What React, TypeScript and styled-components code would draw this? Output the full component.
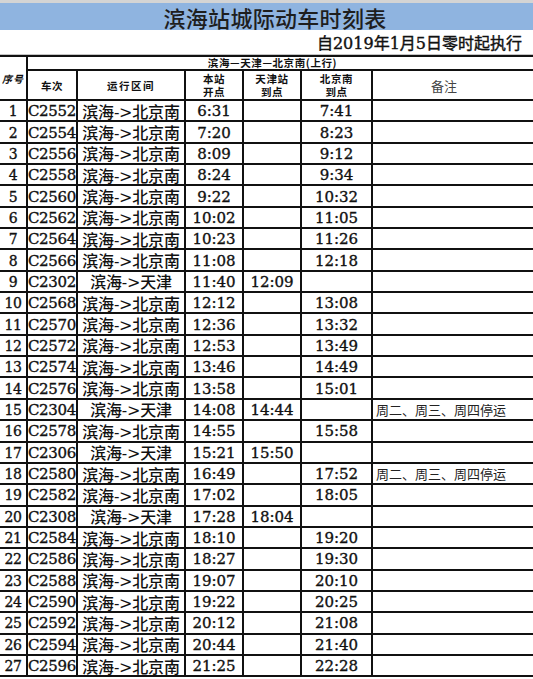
import React from 'react';
import styled, { createGlobalStyle } from 'styled-components';

type Train = {
  no: string;
  to: '北京南' | '天津';
  dep: string;
  tj?: string;
  bj?: string;
  note?: string;
};

const SKIP = '周二、周三、周四停运';

const trains: Train[] = [
  { no: 'C2552', to: '北京南', dep: '6:31', bj: '7:41' },
  { no: 'C2554', to: '北京南', dep: '7:20', bj: '8:23' },
  { no: 'C2556', to: '北京南', dep: '8:09', bj: '9:12' },
  { no: 'C2558', to: '北京南', dep: '8:24', bj: '9:34' },
  { no: 'C2560', to: '北京南', dep: '9:22', bj: '10:32' },
  { no: 'C2562', to: '北京南', dep: '10:02', bj: '11:05' },
  { no: 'C2564', to: '北京南', dep: '10:23', bj: '11:26' },
  { no: 'C2566', to: '北京南', dep: '11:08', bj: '12:18' },
  { no: 'C2302', to: '天津', dep: '11:40', tj: '12:09' },
  { no: 'C2568', to: '北京南', dep: '12:12', bj: '13:08' },
  { no: 'C2570', to: '北京南', dep: '12:36', bj: '13:32' },
  { no: 'C2572', to: '北京南', dep: '12:53', bj: '13:49' },
  { no: 'C2574', to: '北京南', dep: '13:46', bj: '14:49' },
  { no: 'C2576', to: '北京南', dep: '13:58', bj: '15:01' },
  { no: 'C2304', to: '天津', dep: '14:08', tj: '14:44', note: SKIP },
  { no: 'C2578', to: '北京南', dep: '14:55', bj: '15:58' },
  { no: 'C2306', to: '天津', dep: '15:21', tj: '15:50' },
  { no: 'C2580', to: '北京南', dep: '16:49', bj: '17:52', note: SKIP },
  { no: 'C2582', to: '北京南', dep: '17:02', bj: '18:05' },
  { no: 'C2308', to: '天津', dep: '17:28', tj: '18:04' },
  { no: 'C2584', to: '北京南', dep: '18:10', bj: '19:20' },
  { no: 'C2586', to: '北京南', dep: '18:27', bj: '19:30' },
  { no: 'C2588', to: '北京南', dep: '19:07', bj: '20:10' },
  { no: 'C2590', to: '北京南', dep: '19:22', bj: '20:25' },
  { no: 'C2592', to: '北京南', dep: '20:12', bj: '21:08' },
  { no: 'C2594', to: '北京南', dep: '20:44', bj: '21:40' },
  { no: 'C2596', to: '北京南', dep: '21:25', bj: '22:28' },
];

const GlobalStyle = createGlobalStyle`
  html, body {
    margin: 0;
    padding: 0;
    background: #fff;
    overflow: hidden;
  }
  body {
    font-family: "DejaVu Serif", "Noto Sans CJK SC", serif;
    color: #111;
  }
`;

const Sheet = styled.div`
  width: 533px;
  border-top: 3px solid #d4d4d4;
`;

const TitleBar = styled.h1`
  margin: 0;
  height: 27px;
  padding-left: 17px;
  background: #8fb4e0;
  display: flex;
  align-items: center;
  justify-content: center;
  font-family: "Noto Sans CJK SC", sans-serif;
  font-size: 22px;
  font-weight: 500;
  color: #1e1e1e;
  letter-spacing: 0.3px;
`;

const DateLine = styled.div`
  height: 24px;
  border-bottom: 1px solid #c4c4c4;
  display: flex;
  align-items: center;
  justify-content: flex-end;
  padding-right: 11px;
  font-size: 16px;
  font-weight: 400;
  -webkit-text-stroke: 0.4px #111;
`;

const Table = styled.div`
  display: grid;
  grid-template-columns: 28px 50px 108px 58px 58px 71px 1fr;
  grid-template-rows: 14px 30px repeat(27, 21.35px);
  border-top: 2px solid #111;
`;

const Cell = styled.div<{ $last?: boolean }>`
  box-sizing: border-box;
  border-right: ${(p) => (p.$last ? 'none' : '2px solid #111')};
  border-bottom: 2px solid #111;
  display: flex;
  align-items: center;
  justify-content: center;
  overflow: hidden;
  white-space: nowrap;
`;

const SeqHead = styled(Cell)`
  grid-row: span 2;
  font-family: "Noto Sans CJK SC", sans-serif;
  font-size: 10px;
  font-weight: 700;
  letter-spacing: 1px;
  font-style: italic;
`;

const RouteHead = styled(Cell)`
  grid-column: span 6;
  padding-right: 16px;
  overflow: visible;
  font-family: "Noto Sans CJK SC", sans-serif;
  font-size: 10.5px;
  font-weight: 700;
  line-height: 12px;
  letter-spacing: 0.6px;
`;

const HeadCell = styled(Cell)<{ $spaced?: boolean }>`
  flex-direction: column;
  font-family: "Noto Sans CJK SC", sans-serif;
  font-size: 10.5px;
  font-weight: 700;
  letter-spacing: ${(p) => (p.$spaced ? '1.5px' : '0.6px')};
`;

const HeadLine = styled.span`
  display: block;
  height: 13px;
  line-height: 13px;
`;

const NoteHead = styled(Cell)`
  padding-right: 18px;
  font-family: "Noto Sans CJK SC", sans-serif;
  font-size: 13px;
  color: #444;
`;

const NumCell = styled(Cell)<{ $size?: number; $track?: number }>`
  font-size: ${(p) => p.$size ?? 15}px;
  letter-spacing: ${(p) => p.$track ?? 0}px;
  padding-top: 1px;
  -webkit-text-stroke: 0.35px #111;
`;

const RouteCell = styled(Cell)`
  font-size: 16px;
  font-weight: 500;
  letter-spacing: -0.2px;
`;

const NoteCell = styled(Cell)`
  justify-content: flex-start;
  padding-left: 3px;
  font-family: "Noto Sans CJK SC", sans-serif;
  font-size: 13px;
  color: #222;
`;

const App: React.FC = () => {
  return (
    <>
      <GlobalStyle />
      <Sheet>
        <TitleBar>滨海站城际动车时刻表</TitleBar>
        <DateLine>自2019年1月5日零时起执行</DateLine>
        <Table>
          <SeqHead>序号</SeqHead>
          <RouteHead $last>滨海—天津—北京南(上行)</RouteHead>
          <HeadCell>车次</HeadCell>
          <HeadCell $spaced>运行区间</HeadCell>
          <HeadCell>
            <HeadLine>本站</HeadLine>
            <HeadLine>开点</HeadLine>
          </HeadCell>
          <HeadCell>
            <HeadLine>天津站</HeadLine>
            <HeadLine>到点</HeadLine>
          </HeadCell>
          <HeadCell>
            <HeadLine>北京南</HeadLine>
            <HeadLine>到点</HeadLine>
          </HeadCell>
          <NoteHead $last>备注</NoteHead>
          {trains.map((t, i) => (
            <React.Fragment key={t.no}>
              <NumCell $size={14} $track={-0.5}>
                {i + 1}
              </NumCell>
              <NumCell $track={-0.3}>{t.no}</NumCell>
              <RouteCell>滨海-&gt;{t.to}</RouteCell>
              <NumCell>{t.dep}</NumCell>
              <NumCell>{t.tj ?? ''}</NumCell>
              <NumCell>{t.bj ?? ''}</NumCell>
              <NoteCell $last>{t.note ?? ''}</NoteCell>
            </React.Fragment>
          ))}
        </Table>
      </Sheet>
    </>
  );
};

export default App;
